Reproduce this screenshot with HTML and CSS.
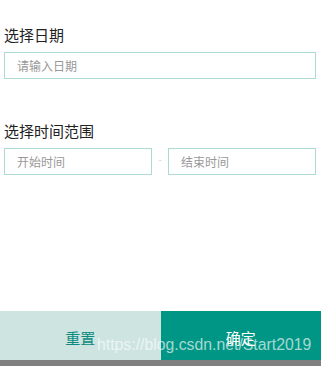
FILE: index.html
```html
<!DOCTYPE html>
<html lang="zh-CN">
    <head>
        <meta charset="UTF-8">
        <meta name="viewport" content="width=device-width, initial-scale=1.0">
        <link rel="stylesheet" href="styles.css">
        <title>选择日期</title>
    </head>
    <body>
        <div class="page">
            <div class="field">
                <div class="label">选择日期</div>
                <input class="box" type="text" placeholder="请输入日期">
            </div>

            <div class="field range">
                <div class="label">选择时间范围</div>
                <div class="range-row">
                    <input class="box" type="text" placeholder="开始时间">
                    <span class="dash">-</span>
                    <input class="box" type="text" placeholder="结束时间">
                </div>
            </div>

            <div class="footer">
                <button class="reset">重置</button>
                <button class="confirm">确定</button>
                <span class="mark">https://blog.csdn.net/Start2019</span>
            </div>
            <div class="bottom-bar"></div>
        </div>
    </body>
</html>
```

FILE: styles.css
```css
body,
html {
    margin: 0;
    padding: 0;
    background: #fff;
    font-family: "Noto Sans CJK SC", "Liberation Sans", sans-serif;
}

.page {
    display: flex;
    flex-direction: column;
    height: 366px;
    width: 321px;
}

.field {
    padding: 0 5px 0 4px;
}

.field:first-child {
    padding-top: 24px;
}

.range {
    padding-top: 41px;
}

.label {
    font-size: 15px;
    line-height: 22px;
    color: #222;
    margin-bottom: 6px;
}

.box {
    box-sizing: border-box;
    width: 100%;
    height: 27px;
    border: 1px solid #addad3;
    padding: 0 12px;
    font-family: "Noto Sans CJK SC", sans-serif;
    font-size: 12px;
    color: #333;
    outline: none;
    margin: 0;
}

.box::placeholder {
    color: #999;
}

.range-row {
    display: flex;
    align-items: center;
}

.range-row .box {
    flex: 1;
    width: auto;
    min-width: 0;
}

.dash {
    width: 16px;
    text-align: center;
    font-size: 9px;
    color: #ccc;
    margin-top: -4px;
}

.footer {
    margin-top: auto;
    display: flex;
    height: 49px;
    position: relative;
}

.footer button {
    flex: 1;
    border: none;
    outline: none;
    font-family: "Noto Sans CJK SC", sans-serif;
    font-size: 15px;
    padding: 4px 0 0 0;
    margin: 0;
    cursor: pointer;
}

.reset {
    background-color: #cde4e1;
    color: #0b8a7d;
}

.confirm {
    background-color: #009685;
    color: #fff;
    border-left: 1px solid #009685;
}

.mark {
    position: absolute;
    left: 97px;
    top: 25px;
    font-family: "Liberation Sans", Arial, sans-serif;
    font-size: 15.8px;
    line-height: 18px;
    color: rgba(255, 255, 255, 0.65);
    pointer-events: none;
}

.bottom-bar {
    height: 6px;
    background-color: #808080;
}
```
